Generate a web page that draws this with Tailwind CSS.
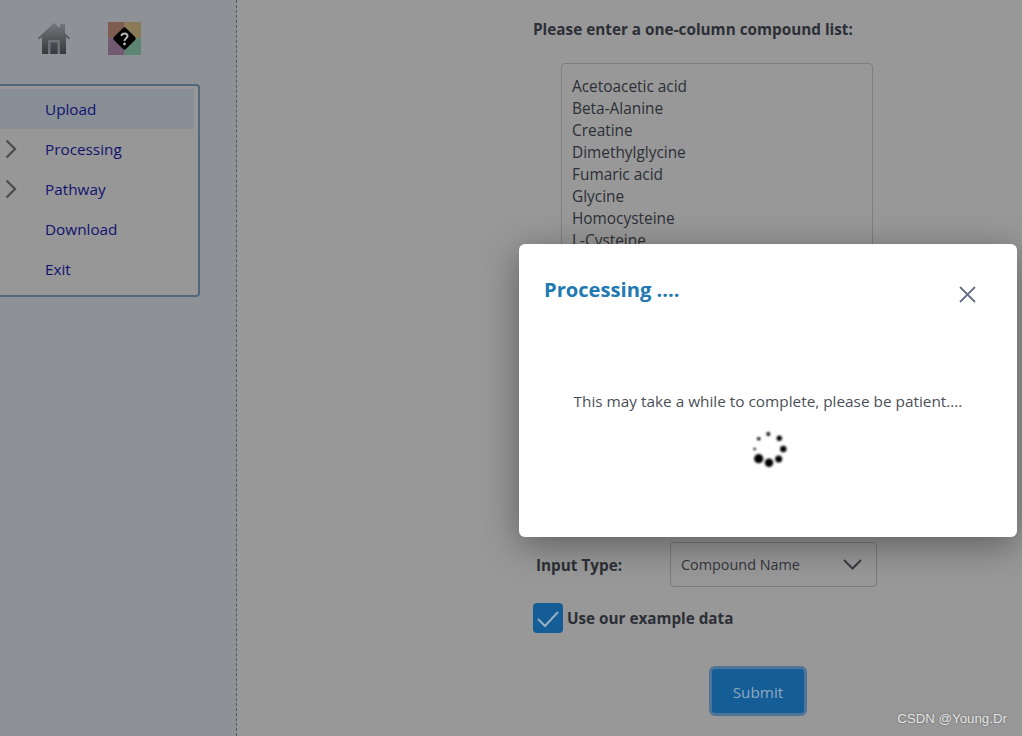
<!DOCTYPE html>
<html lang="en">
<head>
<meta charset="utf-8">
<title>Processing</title>
<script src="https://cdn.jsdelivr.net/npm/@tailwindcss/browser@4"></script>
</head>
<body class="m-0 bg-[#989898]">
<div class="relative flex h-[736px] w-[1022px] overflow-hidden bg-[#989898] font-['Open_Sans',sans-serif] text-[#2c2f36]">
  <aside class="flex h-full w-[237px] shrink-0 flex-col border-r border-dashed border-r-[#55585c] bg-[#8e9297]">
    <div class="flex h-[84px] items-start pl-[38px] pt-[22px]">
      <svg class="h-[33px] w-[32px]" viewBox="0 0 32 33">
        <defs><linearGradient id="h" x1="0" y1="0" x2="0" y2="1"><stop offset="0" stop-color="#74777b"/><stop offset="1" stop-color="#36383b"/></linearGradient></defs>
        <path fill="url(#h)" d="M16 1 L22 6 V2 H27 V11 L32 16 L31 17.5 L28 15 V32 H4 V15 L1 17.5 L0 16 Z"/>
        <path fill="#6f7377" d="M10 18 H22 V32 H19.5 V20.5 H12.5 V32 H10 Z"/>
      </svg>
      <svg class="ml-[38px] h-[33px] w-[33px]" viewBox="0 0 33 33">
        <rect x="0" y="0" width="16.5" height="16.5" fill="#7f5c50"/>
        <rect x="16.5" y="0" width="16.5" height="16.5" fill="#8a7a58"/>
        <rect x="0" y="16.5" width="16.5" height="16.5" fill="#735a73"/>
        <rect x="16.5" y="16.5" width="16.5" height="16.5" fill="#5d8672"/>
        <rect x="8" y="8" width="17" height="17" rx="2" fill="#000" transform="rotate(45 16.5 16.5)"/>
        <path d="M13.5 14 C13.5 10.5 19.5 10.5 19.5 14 C19.5 16.2 16.5 16.2 16.5 19" fill="none" stroke="#b5b5b5" stroke-width="2"/>
        <circle cx="16.5" cy="22" r="1.4" fill="#b5b5b5"/>
      </svg>
    </div>
    <nav class="ml-[-8px] h-[213px] w-[208px] rounded-[4px] border-[2.5px] border-[#51677b] bg-[#979797] pr-[4px] pt-[3px] text-[15.3px] text-[#12126e]">
      <div class="flex h-[40px] items-center bg-[#878e96] pl-[51px]">Upload</div>
      <div class="flex h-[40px] items-center pl-[11px]">
        <svg class="h-[20px] w-[12px]" viewBox="0 0 12 20"><path d="M1.5 1.5 L10 10 L1.5 18.5" fill="none" stroke="#4b4d50" stroke-width="2.3"/></svg>
        <span class="ml-[28px]">Processing</span>
      </div>
      <div class="flex h-[40px] items-center pl-[11px]">
        <svg class="h-[20px] w-[12px]" viewBox="0 0 12 20"><path d="M1.5 1.5 L10 10 L1.5 18.5" fill="none" stroke="#4b4d50" stroke-width="2.3"/></svg>
        <span class="ml-[28px]">Pathway</span>
      </div>
      <div class="flex h-[40px] items-center pl-[51px]">Download</div>
      <div class="flex h-[40px] items-center pl-[51px]">Exit</div>
    </nav>
  </aside>
  <main class="flex-1 pl-[296px]">
    <div class="flex h-[63px] items-start pt-[19px] text-[15.3px] font-bold leading-[20px]">Please enter a one-column compound list:</div>
    <div class="ml-[28px] h-[467px] w-[312px] overflow-hidden rounded-[4px] border border-[#7e7e7e] px-[10px] pt-[12px] text-[15.4px] leading-[22px]">
      <div>Acetoacetic acid</div>
      <div>Beta-Alanine</div>
      <div>Creatine</div>
      <div>Dimethylglycine</div>
      <div>Fumaric acid</div>
      <div>Glycine</div>
      <div>Homocysteine</div>
      <div>L-Cysteine</div>
    </div>
    <div class="mt-[12px] flex h-[45px] items-center pl-[3px]">
      <span class="w-[134px] pt-[1px] text-[15.3px] font-bold">Input Type:</span>
      <div class="flex h-[45px] w-[207px] items-center justify-between rounded-[4px] border border-[#7b7b7f] pl-[10px] pr-[14px] text-[14.4px]">
        <span class="text-[#33363d]">Compound Name</span>
        <svg class="h-[11px] w-[19px]" viewBox="0 0 19 11"><path d="M1 1 L9.5 9.5 L18 1" fill="none" stroke="#3a3c42" stroke-width="2"/></svg>
      </div>
    </div>
    <label class="mt-[16px] flex h-[30px] items-center gap-[4px] text-[15.25px] font-bold">
      <span class="flex h-[30px] w-[30px] items-center justify-center rounded-[4px] bg-[#155d97]">
        <svg class="h-[20px] w-[22px]" viewBox="0 0 22 20"><path d="M1 11 L8 18 L21 4" fill="none" stroke="#9ab0c2" stroke-width="2"/></svg>
      </span>
      <span class="pt-[1px]">Use our example data</span>
    </label>
    <button class="ml-[176px] mt-[33px] block h-[50px] w-[98px] rounded-[6px] border-[3px] border-[#4f7599] bg-[#155d97] pt-[3px] text-[15.3px] text-[#8fa9bf]">Submit</button>
  </main>

  <div class="absolute left-[519px] top-[244px] h-[293px] w-[498px] rounded-[6px] bg-white shadow-[0_8px_36px_rgba(0,0,0,0.38)]">
    <div class="flex items-start justify-between pl-[25px] pr-[41px] pt-[30px]">
      <h2 class="text-[20.15px] font-bold leading-[30px] text-[#2079b0]">Processing ....</h2>
      <svg class="mt-[12px] h-[17px] w-[17px]" viewBox="0 0 17 17"><path d="M1 1 L16 16 M16 1 L1 16" fill="none" stroke="#667085" stroke-width="1.8"/></svg>
    </div>
    <p class="mt-[86px] text-center text-[15.35px] leading-[22px] text-[#4a4f57]">This may take a while to complete, please be patient....</p>
    <svg class="ml-[231px] mt-[18px] h-[40px] w-[40px]" viewBox="750 430 40 40">
      <defs><filter id="b" x="-80%" y="-80%" width="260%" height="260%"><feGaussianBlur stdDeviation="0.9"/></filter></defs>
      <g fill="#000" filter="url(#b)">
        <circle cx="768.3" cy="434" r="2"/>
        <circle cx="779.3" cy="438.3" r="2.7"/>
        <circle cx="783.3" cy="449" r="3.2"/>
        <circle cx="778.7" cy="459" r="3.5"/>
        <circle cx="769" cy="462.7" r="4.2"/>
        <circle cx="758.7" cy="458.7" r="4.6"/>
        <circle cx="754.7" cy="449" r="1.3"/>
        <circle cx="758.7" cy="438.7" r="1.8"/>
      </g>
    </svg>
  </div>

  <div class="absolute bottom-[8px] right-[15px] font-['Liberation_Sans',sans-serif] text-[13.3px] leading-[18px] text-[#e6e6e6] [text-shadow:0_0_2px_#555]">CSDN @Young.Dr</div>
</div>
</body>
</html>
